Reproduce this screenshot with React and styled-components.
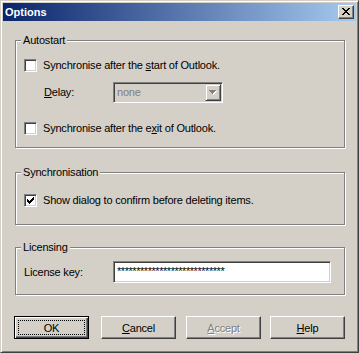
import styled, { createGlobalStyle } from "styled-components";

const Global = createGlobalStyle`
  body {
    margin: 0;
    background: #d4d0c8;
  }
`;

const Window = styled.div`
  box-sizing: border-box;
  width: 359px;
  height: 353px;
  background: #d4d0c8;
  border: 1px solid;
  border-color: #d4d0c8 #404040 #404040 #d4d0c8;
  box-shadow: inset 1px 1px #fff, inset -1px -1px #808080;
  padding: 2px;
  display: flex;
  flex-direction: column;
  font-family: "Liberation Sans", Arial, sans-serif;
  font-size: 11px;
  letter-spacing: -0.2px;
  color: #000;
`;

const TitleBar = styled.div`
  height: 18px;
  flex-shrink: 0;
  display: flex;
  align-items: center;
  justify-content: space-between;
  padding: 0 2px;
  background: linear-gradient(90deg, #0a246a, #a6caf0);
`;

const Title = styled.span`
  color: #fff;
  font-weight: bold;
  letter-spacing: 0;
  line-height: 13px;
`;

const CloseButton = styled.div`
  box-sizing: border-box;
  width: 16px;
  height: 14px;
  display: flex;
  align-items: center;
  justify-content: center;
  background: #d4d0c8;
  border: 1px solid;
  border-color: #fff #404040 #404040 #fff;
  box-shadow: inset -1px -1px #808080;
  svg {
    display: block;
    margin-top: -1px;
  }
`;

const Body = styled.div`
  padding: 19px 11px 0 11px;
  display: flex;
  flex-direction: column;
`;

const Group = styled.div`
  position: relative;
  box-sizing: border-box;
  margin: ${(p) => p.$top}px 0 0 1px;
  height: ${(p) => p.$height}px;
  border: 1px solid #808080;
  box-shadow: inset 1px 1px #fff, 1px 1px #fff;
  padding-left: 8px;
  display: flex;
  flex-direction: column;
`;

const Legend = styled.span`
  position: absolute;
  top: -7px;
  left: 5px;
  padding: 0 2px;
  line-height: 13px;
  background: #d4d0c8;
`;

const Row = styled.div`
  display: flex;
  align-items: center;
  margin-top: ${(p) => p.$top}px;
  padding-left: ${(p) => p.$indent || 0}px;
  line-height: 13px;
`;

const Box = styled.span`
  box-sizing: border-box;
  width: 13px;
  height: 13px;
  flex-shrink: 0;
  margin-right: 6px;
  background: #fff;
  border: 1px solid;
  border-color: #808080 #fff #fff #808080;
  box-shadow: inset 1px 1px #404040, inset -1px -1px #d4d0c8;
  display: flex;
  align-items: center;
  justify-content: center;
`;

const Label = styled.span`
  width: ${(p) => (p.$width ? `${p.$width}px` : "auto")};
  flex-shrink: 0;
`;

const Combo = styled.div`
  box-sizing: border-box;
  width: 110px;
  height: 21px;
  display: flex;
  align-items: stretch;
  background: #d4d0c8;
  border: 1px solid;
  border-color: #808080 #fff #fff #808080;
  box-shadow: inset 1px 1px #404040, inset -1px -1px #d4d0c8;
  padding: 1px;
`;

const ComboText = styled.span`
  flex: 1;
  padding-left: 2px;
  color: #808080;
  line-height: 17px;
`;

const DropButton = styled.span`
  box-sizing: border-box;
  width: 16px;
  display: flex;
  align-items: center;
  justify-content: center;
  background: #d4d0c8;
  border: 1px solid;
  border-color: #d4d0c8 #404040 #404040 #d4d0c8;
  box-shadow: inset 1px 1px #fff, inset -1px -1px #808080;
`;

const TextBox = styled.div`
  box-sizing: border-box;
  width: 218px;
  height: 22px;
  background: #fff;
  border: 1px solid;
  border-color: #808080 #fff #fff #808080;
  box-shadow: inset 1px 1px #404040, inset -1px -1px #d4d0c8;
  padding: 3px 0 0 3px;
  line-height: 13px;
  font-size: 11px;
  letter-spacing: -0.45px;
  overflow: hidden;
  white-space: nowrap;
`;

const Key = styled.u`
  text-decoration: underline;
  text-underline-offset: 1px;
`;

const Buttons = styled.div`
  display: flex;
  margin: 21px 0 0 0;
`;

const Button = styled.button`
  position: relative;
  box-sizing: border-box;
  width: 75px;
  height: 23px;
  margin-left: ${(p) => p.$gap || 0}px;
  padding: 0;
  font: inherit;
  letter-spacing: inherit;
  color: ${(p) => (p.disabled ? "#808080" : "#000")};
  text-shadow: ${(p) => (p.disabled ? "1px 1px #fff" : "none")};
  background: #d4d0c8;
  border: 1px solid;
  border-color: ${(p) =>
    p.$default ? "#000" : "#fff #404040 #404040 #fff"};
  box-shadow: ${(p) =>
    p.$default
      ? "inset 1px 1px #fff, inset -1px -1px #404040, inset -2px -2px #808080"
      : "inset -1px -1px #808080"};
`;

const Focus = styled.span`
  position: absolute;
  inset: 3px;
  border: 1px dotted #000;
`;

function Check() {
  const cols = [2, 3, 4, 3, 2, 1, 0];
  return (
    <svg width="7" height="7" shapeRendering="crispEdges">
      {cols.map((y, x) => (
        <rect key={x} x={x} y={y} width="1" height="3" fill="#000" />
      ))}
    </svg>
  );
}

function CheckBox({ checked, children }) {
  return (
    <>
      <Box>{checked && <Check />}</Box>
      <Label>{children}</Label>
    </>
  );
}

function CloseGlyph() {
  const rows = [
    [0, 1, 6, 7],
    [1, 2, 5, 6],
    [2, 3, 4, 5],
    [3, 4],
    [2, 3, 4, 5],
    [1, 2, 5, 6],
    [0, 1, 6, 7],
  ];
  return (
    <svg width="8" height="7" shapeRendering="crispEdges">
      {rows.map((r, y) =>
        r.map((x) => (
          <rect key={`${x}-${y}`} x={x} y={y} width="1" height="1" fill="#000" />
        ))
      )}
    </svg>
  );
}

function Arrow() {
  const rows = [7, 5, 3, 1];
  return (
    <svg width="8" height="5" shapeRendering="crispEdges">
      {rows.map((w, y) => (
        <rect key={`s${y}`} x={(7 - w) / 2 + 1} y={y + 1} width={w} height="1" fill="#fff" />
      ))}
      {rows.map((w, y) => (
        <rect key={y} x={(7 - w) / 2} y={y} width={w} height="1" fill="#808080" />
      ))}
    </svg>
  );
}

export default function App() {
  return (
    <>
      <Global />
      <Window>
        <TitleBar>
          <Title>Options</Title>
          <CloseButton>
            <CloseGlyph />
          </CloseButton>
        </TitleBar>
        <Body>
          <Group $top={0} $height={108}>
            <Legend>Autostart</Legend>
            <Row $top={18}>
              <CheckBox>
                Synchronise after the <Key>s</Key>tart of Outlook.
              </CheckBox>
            </Row>
            <Row $top={10} $indent={20}>
              <Label $width={69}>
                <Key>D</Key>elay:
              </Label>
              <Combo>
                <ComboText>none</ComboText>
                <DropButton>
                  <Arrow />
                </DropButton>
              </Combo>
            </Row>
            <Row $top={19}>
              <CheckBox>
                Synchronise after the e<Key>x</Key>it of Outlook.
              </CheckBox>
            </Row>
          </Group>

          <Group $top={24} $height={53}>
            <Legend>Synchronisation</Legend>
            <Row $top={21}>
              <CheckBox checked>
                Show dialog to confirm before deleting items.
              </CheckBox>
            </Row>
          </Group>

          <Group $top={22} $height={48}>
            <Legend>Licensing</Legend>
            <Row $top={13}>
              <Label $width={89}>License key:</Label>
              <TextBox>{"*".repeat(28)}</TextBox>
            </Row>
          </Group>

          <Buttons>
            <Button $default>
              OK
              <Focus />
            </Button>
            <Button $gap={12}>
              <Key>C</Key>ancel
            </Button>
            <Button $gap={10} disabled>
              <Key>A</Key>ccept
            </Button>
            <Button $gap={9}>
              <Key>H</Key>elp
            </Button>
          </Buttons>
        </Body>
      </Window>
    </>
  );
}
